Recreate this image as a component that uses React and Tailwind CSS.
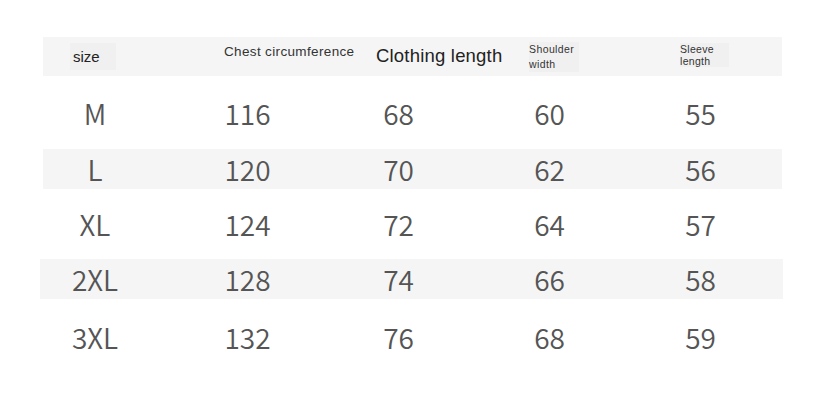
import React from "react";

const rows = [
  { size: "M", chest: 116, length: 68, shoulder: 60, sleeve: 55, band: false, h: "h-[73px]" },
  { size: "L", chest: 120, length: 70, shoulder: 62, sleeve: 56, band: true, h: "h-[40px]" },
  { size: "XL", chest: 124, length: 72, shoulder: 64, sleeve: 57, band: false, h: "h-[70px]" },
  { size: "2XL", chest: 128, length: 74, shoulder: 66, sleeve: 58, band: true, h: "h-[40px]" },
  { size: "3XL", chest: 132, length: 76, shoulder: 68, sleeve: 59, band: false, h: "h-[76px]" },
];

const num = "w-[151px] text-center";

const App = () => {
  return (
    <div className="w-[831px] h-[415px] bg-white pt-[37px] pl-[43px] overflow-hidden">
      <div className="w-[739px] font-['Liberation_Sans',Arial,sans-serif]">
        {/* header */}
        <div className="flex h-[39px] items-center bg-[#f5f5f5] pl-[27px]">
          <div className="w-[152px] h-full flex items-center">
            <span className="bg-[#f0f0f0] px-[3px] py-[6px] pr-[16px] text-[15px] text-[#222] leading-none">
              size
            </span>
          </div>
          <div className="w-[150px] h-full flex items-start pt-[8px] pl-[2px]">
            <span className="text-[13.5px] text-[#333] leading-none tracking-[0.35px]">
              Chest circumference
            </span>
          </div>
          <div className="w-[155px] h-full flex items-center pl-[4px]">
            <span className="text-[18.5px] text-[#222] leading-none tracking-[0.2px]">Clothing length</span>
          </div>
          <div className="w-[151px] h-full flex items-center pl-[2px]">
            <span className="bg-[#f0f0f0] pr-[5px] text-[10.5px] text-[#333] leading-[15px] tracking-[0.4px]">
              Shoulder
              <br />
              width
            </span>
          </div>
          <div className="w-[100px] h-full flex items-center pl-[2px] pb-[4px]">
            <span className="bg-[#f0f0f0] pr-[15px] text-[10.5px] text-[#333] leading-[12px] tracking-[0.3px]">
              Sleeve
              <br />
              length
            </span>
          </div>
        </div>

        {/* rows */}
        {rows.map((r) => (
          <div
            key={r.size}
            className={`flex items-center ${r.h} ${
              r.band ? "bg-[#f5f5f5]" : ""
            } ${r.size === "2XL" ? "-ml-[3px] w-[743px] pl-[3px]" : ""}`}
          >
            <div className="flex w-full items-center font-['Noto_Sans_CJK_SC','Noto_Sans',sans-serif] text-[28px] text-[#555] font-[350] leading-none">
              <div className="w-[104px] text-center">{r.size}</div>
              <div className="w-[25px]" />
              <div className={num}>{r.chest}</div>
              <div className={num}>{r.length}</div>
              <div className={num}>{r.shoulder}</div>
              <div className={num}>{r.sleeve}</div>
            </div>
          </div>
        ))}
      </div>
    </div>
  );
};

export default App;
